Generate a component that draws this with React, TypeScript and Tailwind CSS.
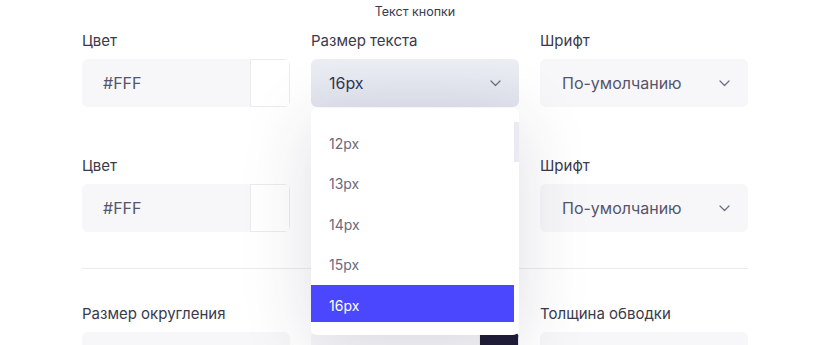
const sizes = ["12px", "13px", "14px", "15px", "16px"];

const Label = ({ children }: { children: React.ReactNode }) => (
  <div className="mb-2 h-5 text-[15px] leading-5 text-[#3a3a4c]">{children}</div>
);

const Chevron = () => (
  <svg width="11" height="7" viewBox="0 0 11 7" fill="none" className="text-[#6c7088]">
    <path d="M1 1l4.5 4.5L10 1" stroke="currentColor" strokeWidth="1.3" strokeLinecap="round" strokeLinejoin="round" />
  </svg>
);

const ColorInput = ({ value, swatch }: { value: string; swatch: string }) => (
  <div className="flex h-12 overflow-hidden rounded-md bg-[#f7f7f9]">
    <div className="flex flex-1 items-center pl-[21px] text-[16px] text-[#55556b]">{value}</div>
    <div className={`w-10 border border-[#ebebef] ${swatch}`}></div>
  </div>
);

const SelectInput = ({ value, active }: { value: string; active?: boolean }) => (
  <div
    className={`flex h-12 items-center justify-between rounded-md pr-[18px] text-[16px] ${
      active
        ? "bg-gradient-to-b from-[#eceef4] to-[#e1e4ed] pl-[18px] text-[#34364f]"
        : "bg-[#f7f7f9] pl-[22px] text-[#55556b]"
    }`}
  >
    <span>{value}</span>
    <Chevron />
  </div>
);

const Dropdown = () => (
  <div className="absolute left-0 right-0 top-[49px] z-10 h-[227px] rounded-md bg-white pb-[13px] shadow-[0_12px_70px_rgba(40,40,80,0.15)]">
    <div className="relative h-full overflow-hidden pt-[15px]">
      <div className="absolute right-0 top-[14px] h-10 w-[5px] bg-[#e9ebf1]"></div>
      {sizes.map((s) => (
        <div
          key={s}
          className={`mr-[5px] flex h-[40.5px] items-center pl-[18px] text-[14px] ${
            s === "16px" ? "bg-[#4b47ff] text-white" : "text-[#6a6a80]"
          }`}
        >
          {s}
        </div>
      ))}
    </div>
  </div>
);

export default function App() {
  return (
    <div className="h-[345px] w-[834px] overflow-hidden bg-white font-['Inter',sans-serif]">
      <div className="ml-[82px] w-[666px]">
        <div className="pt-[4px] text-center text-[12.5px] leading-4 text-[#3c3c4a]">Текст кнопки</div>

        {/* Row 1 */}
        <div className="mt-[11px] grid grid-cols-3 gap-x-[21px]">
          <div>
            <Label>Цвет</Label>
            <ColorInput value="#FFF" swatch="bg-white" />
          </div>
          <div className="relative">
            <Label>Размер текста</Label>
            <div className="relative">
              <SelectInput value="16px" active />
              <Dropdown />
            </div>
          </div>
          <div>
            <Label>Шрифт</Label>
            <SelectInput value="По-умолчанию" />
          </div>
        </div>

        {/* Row 2 */}
        <div className="mt-[49px] grid grid-cols-3 gap-x-[21px]">
          <div>
            <Label>Цвет</Label>
            <ColorInput value="#FFF" swatch="bg-white" />
          </div>
          <div>
            <div className="mb-2 h-5"></div>
            <div className="h-12 rounded-md bg-[#f7f7f9]"></div>
          </div>
          <div>
            <Label>Шрифт</Label>
            <SelectInput value="По-умолчанию" />
          </div>
        </div>

        <div className="mt-9 h-px bg-[#e9ebf1]"></div>

        {/* Row 3 */}
        <div className="mt-[35px] grid grid-cols-3 gap-x-[21px]">
          <div>
            <Label>Размер округления</Label>
            <div className="h-12 rounded-md bg-[#f7f7f9]"></div>
          </div>
          <div>
            <div className="mb-2 h-5"></div>
            <ColorInput value="" swatch="bg-[#1e1c36]" />
          </div>
          <div>
            <Label>Толщина обводки</Label>
            <div className="h-12 rounded-md bg-[#f7f7f9]"></div>
          </div>
        </div>
      </div>
    </div>
  );
}
